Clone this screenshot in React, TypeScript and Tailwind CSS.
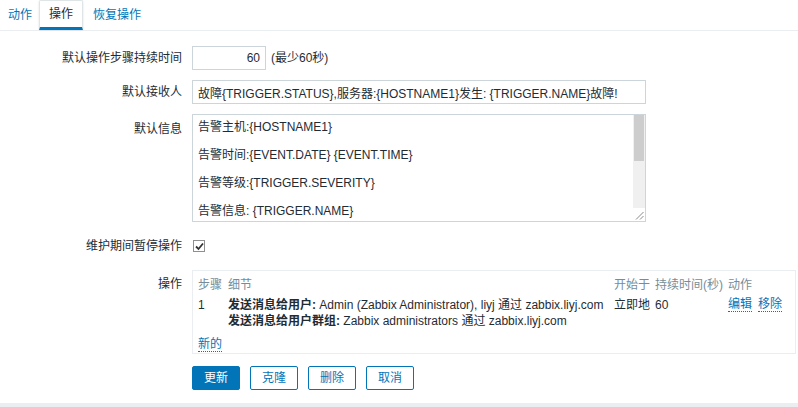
import React from 'react'

const font = { fontFamily: '"Liberation Sans", Arial, "Noto Sans CJK SC", sans-serif' }

const message = [
  '告警主机:{HOSTNAME1}',
  '',
  '告警时间:{EVENT.DATE} {EVENT.TIME}',
  '',
  '告警等级:{TRIGGER.SEVERITY}',
  '',
  '告警信息: {TRIGGER.NAME}',
  '',
  '告警项目:{TRIGGER.KEY1}',
  '',
  '问题详情:{ITEM.NAME}:{ITEM.VALUE}',
  '',
  '当前状态:{TRIGGER.STATUS}:{ITEM.VALUE1}',
  '',
  '事件ID:{EVENT.ID}',
].join('\n')

function Row({ label, top, children }: { label: string; top?: boolean; children: React.ReactNode }) {
  return (
    <div className={`flex ${top ? 'items-start' : 'items-center'}`}>
      <div className={`w-[192px] shrink-0 pr-[10px] text-right ${top ? 'pt-[6px]' : ''}`}>{label}</div>
      <div className="flex items-center">{children}</div>
    </div>
  )
}

function Link({ children }: { children: React.ReactNode }) {
  return <span className="text-[#0275b8] border-b border-dotted border-[#0275b8] leading-[14px]">{children}</span>
}

export default function App() {
  return (
    <div style={font} className="w-[798px] h-[407px] bg-white text-[12px] text-[#1f2c33] flex flex-col">
      {/* tabs */}
      <div className="h-[31px] border-b border-[#ebeef0] flex items-end pl-[2px]">
        <div className="px-[6px] h-[30px] flex items-center text-[#0275b8]">动作</div>
        <div className="ml-[1px] w-[44px] h-[30px] flex items-center justify-center border border-[#dfe4e7] border-b-[3px] border-b-[#0275b8] rounded-t-[2px] shadow-[0_0_2px_rgba(0,0,0,0.15)]">
          操作
        </div>
        <div className="ml-[4px] px-[6px] h-[30px] flex items-center text-[#0275b8]">恢复操作</div>
      </div>

      <div className="flex-1 pt-[15px] flex flex-col gap-[10px]">
        <Row label="默认操作步骤持续时间">
          <input
            readOnly
            value="60"
            className="w-[74px] h-[24px] border border-[#ccd5d9] px-[5px] text-right outline-none"
          />
          <span className="ml-[5px]">(最少60秒)</span>
        </Row>

        <Row label="默认接收人">
          <input
            readOnly
            value="故障{TRIGGER.STATUS},服务器:{HOSTNAME1}发生: {TRIGGER.NAME}故障!"
            className="w-[454px] h-[24px] border border-[#ccd5d9] px-[5px] outline-none"
          />
        </Row>

        <Row label="默认信息" top>
          <div className="relative w-[454px] h-[108px] border border-[#ccd5d9] flex">
            <textarea
              readOnly
              defaultValue={message}
              className="flex-1 pl-[5px] py-[5px] leading-[14px] outline-none resize-none overflow-hidden"
            />
            {/* scrollbar */}
            <div className="w-[12px] flex flex-col">
              <div className="flex-1 bg-[#f0f0f0] px-[1px]">
                <div className="h-[46px] bg-[#cdcdcd]" />
              </div>
              <div className="h-[13px] bg-white" />
            </div>
            <svg className="absolute right-[1px] bottom-[1px]" width="9" height="9" viewBox="0 0 9 9">
              <path d="M8.5 1 L1 8.5 M8.5 5 L5 8.5" stroke="#8a8a8a" strokeWidth="1" fill="none" />
            </svg>
          </div>
        </Row>

        <Row label="维护期间暂停操作">
          <div className="h-[28px] flex items-center">
            <span className="ml-[1px] w-[12px] h-[12px] border border-[#8f8f8f] bg-white flex items-center justify-center">
              <svg width="9" height="9" viewBox="0 0 9 9">
                <path d="M1 4.5 L3.5 7 L8 1.5" fill="none" stroke="#333" strokeWidth="1.8" />
              </svg>
            </span>
          </div>
        </Row>

        <div className="flex items-start">
          <div className="w-[192px] shrink-0 pr-[10px] text-right pt-[6px] leading-[16px]">操作</div>
          <div className="w-[604px] h-[84px] border border-[#ebeef0] pl-[5px] pt-[6px]">
            <div className="grid grid-cols-[30px_386px_41px_73px_1fr] items-start leading-[16px]">
              <div className="text-[#768d99]">步骤</div>
              <div className="text-[#768d99]">细节</div>
              <div className="text-[#768d99]">开始于</div>
              <div className="text-[#768d99]">持续时间(秒)</div>
              <div className="text-[#768d99]">动作</div>

              <div className="mt-[4px]">1</div>
              <div className="mt-[4px]">
                <div>
                  <b>发送消息给用户:</b> Admin (Zabbix Administrator), liyj 通过 zabbix.liyj.com
                </div>
                <div>
                  <b>发送消息给用户群组:</b> Zabbix administrators 通过 zabbix.liyj.com
                </div>
              </div>
              <div className="mt-[4px]">立即地</div>
              <div className="mt-[4px]">60</div>
              <div className="mt-[4px] flex items-start gap-[6px]">
                <Link>编辑</Link>
                <Link>移除</Link>
              </div>
            </div>
            <div className="mt-[7px] leading-[16px]">
              <Link>新的</Link>
            </div>
          </div>
        </div>

        <div className="flex pl-[192px] gap-[10px] mt-[2px]">
          <button className="w-[48px] h-[24px] rounded-[2px] bg-[#0275b8] border border-[#0275b8] text-white">更新</button>
          <button className="w-[48px] h-[24px] rounded-[2px] bg-white border border-[#0275b8] text-[#0275b8]">克隆</button>
          <button className="w-[48px] h-[24px] rounded-[2px] bg-white border border-[#0275b8] text-[#0275b8]">删除</button>
          <button className="w-[48px] h-[24px] rounded-[2px] bg-white border border-[#0275b8] text-[#0275b8]">取消</button>
        </div>
      </div>

      <div className="h-[4px] bg-[#ebeef0]" />
    </div>
  )
}
